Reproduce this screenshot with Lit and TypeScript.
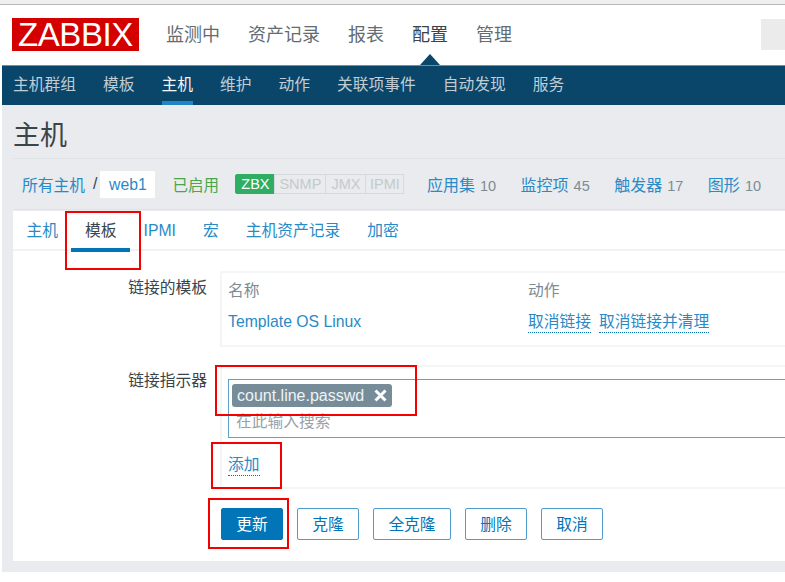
import { LitElement, html, css } from "lit";
import { customElement } from "lit/decorators.js";

@customElement("app-root")
export class AppRoot extends LitElement {
  static styles = css`
    :host {
      display: block;
      position: relative;
      width: 785px;
      height: 582px;
      overflow: hidden;
      background: #fff;
      font-family: "Liberation Sans", "Noto Sans CJK SC", sans-serif;
      font-size: 15.75px;
      color: #3a4449;
    }
    a { color: #2a8ac6; text-decoration: none; }
    .strip { height: 4px; background: #efefef; border-bottom: 1px solid #b4b8b8; }
    .top { height: 60px; display: flex; align-items: flex-start; position: relative; padding-left: 12px; }
    .logo {
      width: 127px; height: 33px; margin-top: 13px; background: #d40000; color: #fff;
      font-size: 33px; line-height: 34px; text-align: center; letter-spacing: -0.4px;
    }
    .menu { display: flex; gap: 28px; margin-left: 27px; margin-top: 18px; font-size: 18px; line-height: 24px; color: #636c70; }
    .menu .on { color: #3a4449; }
    .search { position: absolute; left: 761px; top: 14px; width: 24px; height: 31px; background: #ebebeb; }
    .caret {
      position: absolute; left: 420px; top: 49px; width: 20px; height: 11px;
      background: #0a466a; clip-path: polygon(50% 0, 100% 100%, 0 100%);
    }
    .page { margin-left: 2px; height: 507px; background: #e9ebee; display: flex; flex-direction: column; }
    .nav {
      height: 40px; background: #0a466a; border-top: 1px solid #6e8fa3; box-sizing: border-box;
      display: flex; gap: 27px; padding-left: 11px; line-height: 38px; color: #c0cdd5;
    }
    .nav span { height: 39px; box-sizing: border-box; }
    .nav .on { color: #f2f5f7; border-bottom: 4px solid #1f85c4; }
    .title { height: 54px; margin-left: 11px; font-size: 27px; line-height: 62px; color: #3a4449; border-bottom: 1px solid #e0e3e6; box-sizing: border-box; }
    .crumbs {
      height: 51px; margin-left: 12px; display: flex; align-items: center; padding-left: 8px;
      border-bottom: 1px solid #e0e3e6; box-sizing: border-box;
    }
    .sep { margin: 0 3px 0 8px; color: #3a4449; }
    .cur { width: 55px; height: 27px; background: #fff; text-align: center; line-height: 27px; }
    .enabled { color: #4aa64a; margin-left: 17px; width: 63px; font-size: 15.5px; }
    .tags { display: flex; font-size: 14.5px; line-height: 18px; width: 191.5px; }
    .tags span { border: 1px solid #d5dadd; color: #c4cacd; height: 20px; box-sizing: border-box; text-align: center; margin-right: -1px; }
    .tags .zbx { background: #2fae63; border-color: #2fae63; color: #fff; width: 40px; border-radius: 2px 0 0 2px; }
    .tags .snmp { width: 52px; }
    .tags .jmx { width: 41px; }
    .tags .ipmi { width: 39px; }
    .links { display: flex; gap: 24.5px; font-size: 16px; }
    .n { color: #7d8b93; font-size: 14.5px; margin-left: 5px; }
    .panel { margin: 1px 0 11px 11px; flex: 1; background: #fff; }
    .tabs {
      height: 40px; box-sizing: border-box; border-bottom: 2px solid #f1f2f3; display: flex;
      padding-left: 13.5px; line-height: 39px;
    }
    .tab { margin-right: 27px; position: relative; white-space: nowrap; }
    .tab.on { color: #3a4449; }
    .tab.on::after { content: ""; position: absolute; left: -14px; right: -13px; top: 37px; height: 4px; background: #0275b8; }
    .row { display: flex; }
    .label { width: 194px; text-align: right; line-height: 22px; margin-right: 13px; padding-top: 6px; }
    .box { flex: 1; border: 2px solid #f4f5f5; border-right: 0; box-sizing: border-box; padding: 0 0 0 6px; }
    .r1 { margin-top: 20px; }
    .r1 .box { height: 76px; }
    .cols { display: grid; grid-template-columns: 300px 1fr; line-height: 22px; }
    .head { color: #7d8b93; padding-top: 7px; height: 32px; box-sizing: border-box; }
    .tpl { padding-top: 6px; }
    .act { display: flex; gap: 8px; padding-top: 6px; }
    .dot { border-bottom: 1px dotted #0275b8; height: 21px; display: block; }
    .r2 { margin-top: 18px; }
    .r2 .label { padding-top: 5px; }
    .r2 .box { height: 124px; padding-top: 12px; }
    .input { height: 59px; border: 1px solid #5fa3c9; border-right: 0; box-sizing: border-box; padding: 4px 0 0 3px; }
    .tag {
      display: inline-flex; align-items: center; height: 23px; width: 160px; box-sizing: border-box; padding: 0 5px;
      background: #768d99; border-radius: 3px; color: #f0f3f4; font-size: 16px; justify-content: space-between;
    }
    .tag svg { display: block; }
    .ph { color: #9aa3a8; padding-left: 4px; line-height: 22px; margin-top: 4px; }
    .add { display: inline-block; margin-top: 16px; line-height: 22px; }
    .btns { display: flex; gap: 14px; margin: 19px 0 0 208px; }
    .btn {
      height: 32px; width: 62px; box-sizing: border-box; border: 1px solid #4d9ccb; border-radius: 2px;
      color: #0275b8; text-align: center; line-height: 32px;
    }
    .btn.wide { width: 78px; }
    .btn.pri { background: #0275b8; color: #fff; border-color: #0275b8; }
    .mark { position: absolute; border: 2px solid #f40000; box-sizing: border-box; pointer-events: none; }
    .m1 { left: 65px; top: 211px; width: 76px; height: 59px; }
    .m2 { left: 215px; top: 365px; width: 202px; height: 51px; }
    .m3 { left: 211px; top: 442px; width: 71px; height: 47px; }
    .m4 { left: 208px; top: 498px; width: 81px; height: 51px; }
  `;

  render() {
    return html`
      <div class="strip"></div>
      <div class="top">
        <div class="logo">ZABBIX</div>
        <div class="menu">
          <span>监测中</span><span>资产记录</span><span>报表</span><span class="on">配置</span><span>管理</span>
        </div>
        <div class="search"></div>
        <div class="caret"></div>
      </div>
      <div class="page">
        <div class="nav">
          <span>主机群组</span><span>模板</span><span class="on">主机</span><span>维护</span><span>动作</span>
          <span>关联项事件</span><span>自动发现</span><span>服务</span>
        </div>
        <div class="title">主机</div>
        <div class="crumbs">
          <a href="#">所有主机</a><span class="sep">/</span><a class="cur" href="#">web1</a>
          <span class="enabled">已启用</span>
          <div class="tags"><span class="zbx">ZBX</span><span class="snmp">SNMP</span><span class="jmx">JMX</span><span class="ipmi">IPMI</span></div>
          <div class="links">
            <span><a href="#">应用集</a><span class="n">10</span></span>
            <span><a href="#">监控项</a><span class="n">45</span></span>
            <span><a href="#">触发器</a><span class="n">17</span></span>
            <span><a href="#">图形</a><span class="n">10</span></span>
          </div>
        </div>
        <div class="panel">
          <div class="tabs">
            <a class="tab" href="#">主机</a><a class="tab on" href="#">模板</a>
            <a class="tab" href="#">IPMI</a><a class="tab" href="#">宏</a>
            <a class="tab" href="#">主机资产记录</a><a class="tab" href="#">加密</a>
          </div>
          <div class="row r1">
            <div class="label">链接的模板</div>
            <div class="box">
              <div class="cols">
                <div class="head">名称</div><div class="head">动作</div>
                <div class="tpl"><a href="#">Template OS Linux</a></div>
                <div class="act"><a class="dot" href="#">取消链接</a><a class="dot" href="#">取消链接并清理</a></div>
              </div>
            </div>
          </div>
          <div class="row r2">
            <div class="label">链接指示器</div>
            <div class="box">
              <div class="input">
                <span class="tag">count.line.passwd
                  <svg width="13" height="13" viewBox="0 0 13 13"><path d="M1.5 1.5l10 10M11.5 1.5l-10 10" stroke="#fff" stroke-width="3"/></svg>
                </span>
                <div class="ph">在此输入搜索</div>
              </div>
              <a class="add dot" href="#">添加</a>
            </div>
          </div>
          <div class="btns">
            <div class="btn pri">更新</div><div class="btn">克隆</div><div class="btn wide">全克隆</div>
            <div class="btn">删除</div><div class="btn">取消</div>
          </div>
        </div>
      </div>
      <div class="mark m1"></div><div class="mark m2"></div><div class="mark m3"></div><div class="mark m4"></div>
    `;
  }
}
